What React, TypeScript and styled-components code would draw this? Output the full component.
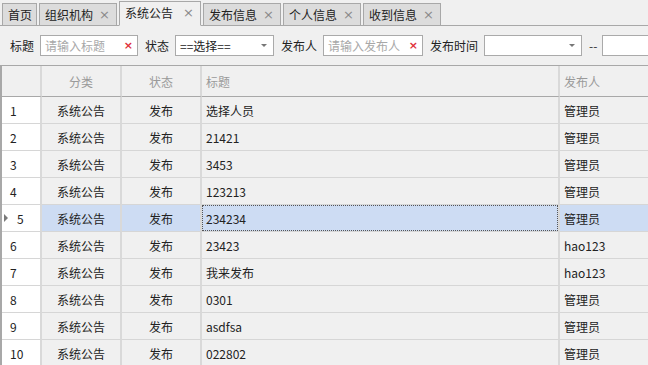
import React from "react";
import styled, { createGlobalStyle, css } from "styled-components";

const Global = createGlobalStyle`
  html, body { margin: 0; padding: 0; background: #f0f0f0; }
  body { font-family: "Noto Sans CJK SC", "Noto Sans", sans-serif; font-size: 12px; color: #222; }
`;

const Page = styled.div`
  width: 648px;
  height: 365px;
  overflow: hidden;
  background: #f0f0f0;
  display: flex;
  flex-direction: column;
`;

const TabBar = styled.div`
  height: 25px;
  display: flex;
  align-items: flex-end;
  padding-left: 2px;
  border-bottom: 1px solid #a8a8a8;
  flex-shrink: 0;
`;

const Tab = styled.div<{ $active?: boolean; $w: number }>`
  box-sizing: border-box;
  width: ${(p) => p.$w}px;
  height: ${(p) => (p.$active ? 25 : 22)}px;
  margin-right: 2px;
  margin-bottom: ${(p) => (p.$active ? -1 : 0)}px;
  border: 1px solid #a8a8a8;
  border-bottom: ${(p) => (p.$active ? "1px solid #f0f0f0" : "none")};
  background: ${(p) => (p.$active ? "#f0f0f0" : "#dcdcdc")};
  display: flex;
  align-items: center;
  justify-content: space-between;
  padding: 0 6px 0 5px;
  padding-bottom: ${(p) => (p.$active ? 2 : 0)}px;
  color: #222;
  font-size: 12px;
  line-height: 1;
  white-space: nowrap;
`;

const TabClose = styled.span`
  color: #8a8a8a;
  font-size: 13px;
  font-family: "DejaVu Sans", sans-serif;
`;

const FilterBar = styled.div`
  height: 39px;
  display: flex;
  align-items: center;
  padding-left: 10px;
  flex-shrink: 0;
  white-space: nowrap;
`;

const Label = styled.span`
  margin-right: 6px;
  color: #222;
`;

const Field = styled.div<{ $w: number }>`
  box-sizing: border-box;
  width: ${(p) => p.$w}px;
  height: 21px;
  border: 1px solid #aaa;
  background: #fff;
  display: flex;
  align-items: center;
  justify-content: space-between;
  padding: 0 4px 0 4px;
  margin-right: 7px;
  flex-shrink: 0;
`;

const Placeholder = styled.span`
  color: #a8a8a8;
`;

const Value = styled.span`
  color: #222;
`;

const Clear = styled.span`
  color: #e0303a;
  font-weight: bold;
  font-size: 11px;
  font-family: "DejaVu Sans", sans-serif;
`;

const Arrow = styled.span`
  width: 0;
  height: 0;
  border-left: 3px solid transparent;
  border-right: 3px solid transparent;
  border-top: 3px solid #777;
  margin-right: 2px;
`;

const Dash = styled.span`
  margin: 0 5px 0 0;
  color: #333;
`;

const Grid = styled.div`
  flex: 1;
  border-top: 1px solid #a8a8a8;
  border-left: 2px solid #a8a8a8;
  display: grid;
  grid-template-columns: 40px 80px 80px 358px 100px;
  grid-auto-rows: 27px;
  grid-template-rows: 31px;
  align-content: start;
`;

const Cell = styled.div<{
  $align?: "left" | "center";
  $head?: boolean;
  $num?: boolean;
  $sel?: boolean;
  $focus?: boolean;
}>`
  box-sizing: border-box;
  display: flex;
  align-items: center;
  justify-content: ${(p) => (p.$align === "center" ? "center" : "flex-start")};
  padding: 0 4px;
  border-right: 2px solid #d9d9d9;
  border-bottom: 1px solid ${(p) => (p.$head ? "#a8a8a8" : "#d6d6d6")};
  background: ${(p) => (p.$sel ? "#cddcf3" : p.$num && !p.$head ? "#ffffff" : "#f0f0f0")};
  color: ${(p) => (p.$head ? "#9a9a9a" : "#222")};
  white-space: nowrap;
  position: relative;
  ${(p) =>
    p.$num &&
    css`
      padding-left: 8px;
    `}
  ${(p) =>
    p.$focus &&
    css`
      &::after {
        content: "";
        position: absolute;
        inset: 0 0 0 0;
        border: 1px dotted #555;
        pointer-events: none;
      }
    `}
`;

const RowMark = styled.span`
  width: 0;
  height: 0;
  border-top: 4px solid transparent;
  border-bottom: 4px solid transparent;
  border-left: 4px solid #7a7a7a;
  margin: 0 9px 0 -6px;
`;

const tabs = [
  { t: "首页", w: 35, close: false },
  { t: "组织机构", w: 78, close: true },
  { t: "系统公告", w: 82, close: true, active: true },
  { t: "发布信息", w: 78, close: true },
  { t: "个人信息", w: 78, close: true },
  { t: "收到信息", w: 78, close: true },
];

const rows = [
  ["选择人员", "管理员"],
  ["21421", "管理员"],
  ["3453", "管理员"],
  ["123213", "管理员"],
  ["234234", "管理员"],
  ["23423", "hao123"],
  ["我来发布", "hao123"],
  ["0301", "管理员"],
  ["asdfsa", "管理员"],
  ["022802", "管理员"],
];

export default function App() {
  return (
    <Page>
      <Global />
      <TabBar>
        {tabs.map((tb) => (
          <Tab key={tb.t} $w={tb.w} $active={tb.active}>
            <span>{tb.t}</span>
            {tb.close && <TabClose>×</TabClose>}
          </Tab>
        ))}
      </TabBar>
      <FilterBar>
        <Label>标题</Label>
        <Field $w={98}>
          <Placeholder>请输入标题</Placeholder>
          <Clear>×</Clear>
        </Field>
        <Label>状态</Label>
        <Field $w={99}>
          <Value>==选择==</Value>
          <Arrow />
        </Field>
        <Label>发布人</Label>
        <Field $w={100}>
          <Placeholder>请输入发布人</Placeholder>
          <Clear>×</Clear>
        </Field>
        <Label>发布时间</Label>
        <Field $w={98}>
          <span />
          <Arrow />
        </Field>
        <Dash>--</Dash>
        <Field $w={60} />
      </FilterBar>
      <Grid>
        <Cell $head $num />
        <Cell $head $align="center">分类</Cell>
        <Cell $head $align="center">状态</Cell>
        <Cell $head>标题</Cell>
        <Cell $head>发布人</Cell>
        {rows.map((r, i) => {
          const sel = i === 4;
          return (
            <React.Fragment key={i}>
              <Cell $num>
                {sel && <RowMark />}
                {i + 1}
              </Cell>
              <Cell $align="center" $sel={sel}>系统公告</Cell>
              <Cell $align="center" $sel={sel}>发布</Cell>
              <Cell $sel={sel} $focus={sel}>{r[0]}</Cell>
              <Cell $sel={sel}>{r[1]}</Cell>
            </React.Fragment>
          );
        })}
      </Grid>
    </Page>
  );
}
